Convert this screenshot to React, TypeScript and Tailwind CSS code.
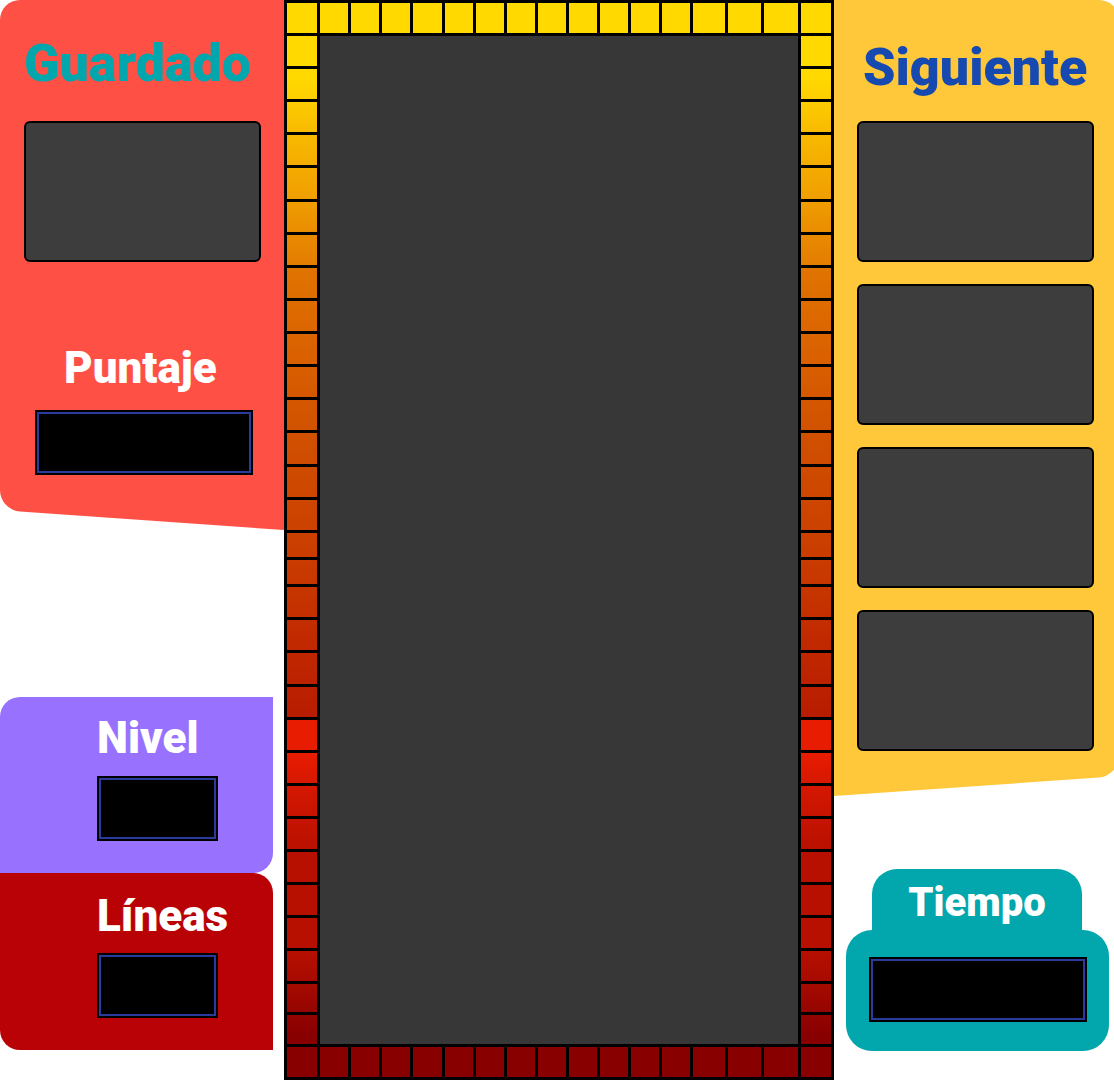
import React from "react";

const TOP_CELLS = 17;
const SIDE_CELLS = 31;

const rowTracks =
  "grid-cols-[30px_28fr_28fr_28fr_29fr_28fr_28fr_28fr_28fr_28fr_28fr_28fr_28fr_32fr_33fr_34fr_30px]";
const sideTracks =
  "grid-rows-[33px_33px_33px_33px_34px_33px_33px_33px_33px_33px_33px_33px_34px_33px_33px_27px_27px_33px_33px_34px_33px_33px_33px_33px_33px_33px_33px_33px_33px_31px_29px]";
const fire =
  "bg-[linear-gradient(180deg,#ffd900_0px,#ffd900_42px,#fccc00_66px,#f8b800_100px,#f0a000_160px,#e88800_205px,#e47c00_230px,#e07400_232px,#da6000_320px,#d05000_400px,#cc4200_490px,#c83800_540px,#c02800_610px,#b81c00_681px,#e81c00_684px,#e81c00_716px,#d01600_760px,#b81000_815px,#b81000_912px,#a40a00_950px,#880000_1000px)]";

function BrickRow({ color }: { color: string }) {
  return (
    <div className={`grid h-9 gap-[3px] border-[3px] border-black bg-black ${rowTracks}`}>
      {Array.from({ length: TOP_CELLS }, (_, i) => (
        <span key={i} className={color} />
      ))}
    </div>
  );
}

function BrickColumn() {
  return (
    <div className={`grid w-9 shrink-0 border-x-[3px] border-black ${fire} ${sideTracks}`}>
      {Array.from({ length: SIDE_CELLS }, (_, i) => (
        <span key={i} className="border-b-[3px] border-black last:border-b-0" />
      ))}
    </div>
  );
}

function Board() {
  return (
    <main>
      <BrickRow color="bg-[#ffd900]" />
      <div className="flex">
        <BrickColumn />
        <div className="grow bg-[#373737]" />
        <BrickColumn />
      </div>
      <BrickRow color="bg-[#880000]" />
    </main>
  );
}

function PieceBox() {
  return <div className="h-[141px] rounded-md border-2 border-black bg-[#3d3d3d]" />;
}

function Counter({ label, className }: { label: string; className: string }) {
  return (
    <output
      aria-labelledby={label}
      className={`block h-[65px] border-2 border-black bg-black ${className}`}
    >
      <span className="block h-full border-2 border-[#2a3b9b]" />
    </output>
  );
}

const large = "text-[52px] leading-[60px]";
const small = "text-[44px] leading-[48px]";

export default function App() {
  return (
    <div className="grid w-full grid-cols-[minmax(0,284fr)_minmax(0,550fr)_minmax(0,280fr)] overflow-hidden bg-white font-['Roboto',sans-serif] font-black">
      <aside className="text-white">
        <section className="relative isolate h-[530px] pt-[34px] pr-[23px] pl-6">
          <div className="absolute inset-x-0 top-0 -z-10 h-3/4 rounded-tl-[20px] bg-[#ff5045]" />
          <div className="absolute inset-x-0 bottom-0 -z-10 h-1/2 origin-bottom-right skew-y-[4deg] rounded-bl-[20px] bg-[#ff5045]" />
          <h2 className={`${large} text-[#02a6ad]`}>Guardado</h2>
          <div className="mt-[27px]">
            <PieceBox />
          </div>
          <h2 id="puntaje" className={`${small} mt-[82px] px-10`}>
            Puntaje
          </h2>
          <div className="mt-[18px] pr-2 pl-[11px]">
            <Counter label="puntaje" className="w-full" />
          </div>
        </section>
        <section className="mt-[167px] mr-[11px] h-44 rounded-tl-[20px] rounded-br-[20px] bg-[#9872ff] pt-[17px] pl-[97px]">
          <h2 id="nivel" className={small}>
            Nivel
          </h2>
          <Counter label="nivel" className="mt-[14px] w-[121px]" />
        </section>
        <section className="mr-[11px] h-[177px] rounded-tr-[20px] rounded-bl-[20px] bg-[#b90206] pt-[19px] pl-[97px]">
          <h2 id="lineas" className={small}>
            Líneas
          </h2>
          <Counter label="lineas" className="mt-[13px] w-[121px]" />
        </section>
      </aside>

      <Board />

      <aside>
        <section className="relative isolate h-[796px] pt-[38px] pr-5 pl-[23px]">
          <div className="absolute top-0 -right-[5px] left-0 -z-10 h-3/4 rounded-tr-[20px] bg-[#ffc83b]" />
          <div className="absolute -right-[5px] bottom-0 left-0 -z-10 h-1/2 origin-bottom-left -skew-y-[4deg] rounded-br-[20px] bg-[#ffc83b]" />
          <h2 className={`${large} pl-1.5 text-[#174ab0]`}>Siguiente</h2>
          <div className="mt-[23px] flex flex-col gap-[22px]">
            <PieceBox />
            <PieceBox />
            <PieceBox />
            <PieceBox />
          </div>
        </section>
        <section className="mt-[73px] mr-[5px] ml-3 text-white">
          <div className="mr-[27px] ml-[26px] h-[61px] rounded-t-[25px] bg-[#02a6ad] pt-[10px]">
            <h2 id="tiempo" className="text-center text-[40px] leading-[48px]">
              Tiempo
            </h2>
          </div>
          <div className="rounded-[26px] bg-[#02a6ad] pt-[27px] pr-[22px] pb-[29px] pl-[23px]">
            <Counter label="tiempo" className="w-full" />
          </div>
        </section>
      </aside>
    </div>
  );
}
